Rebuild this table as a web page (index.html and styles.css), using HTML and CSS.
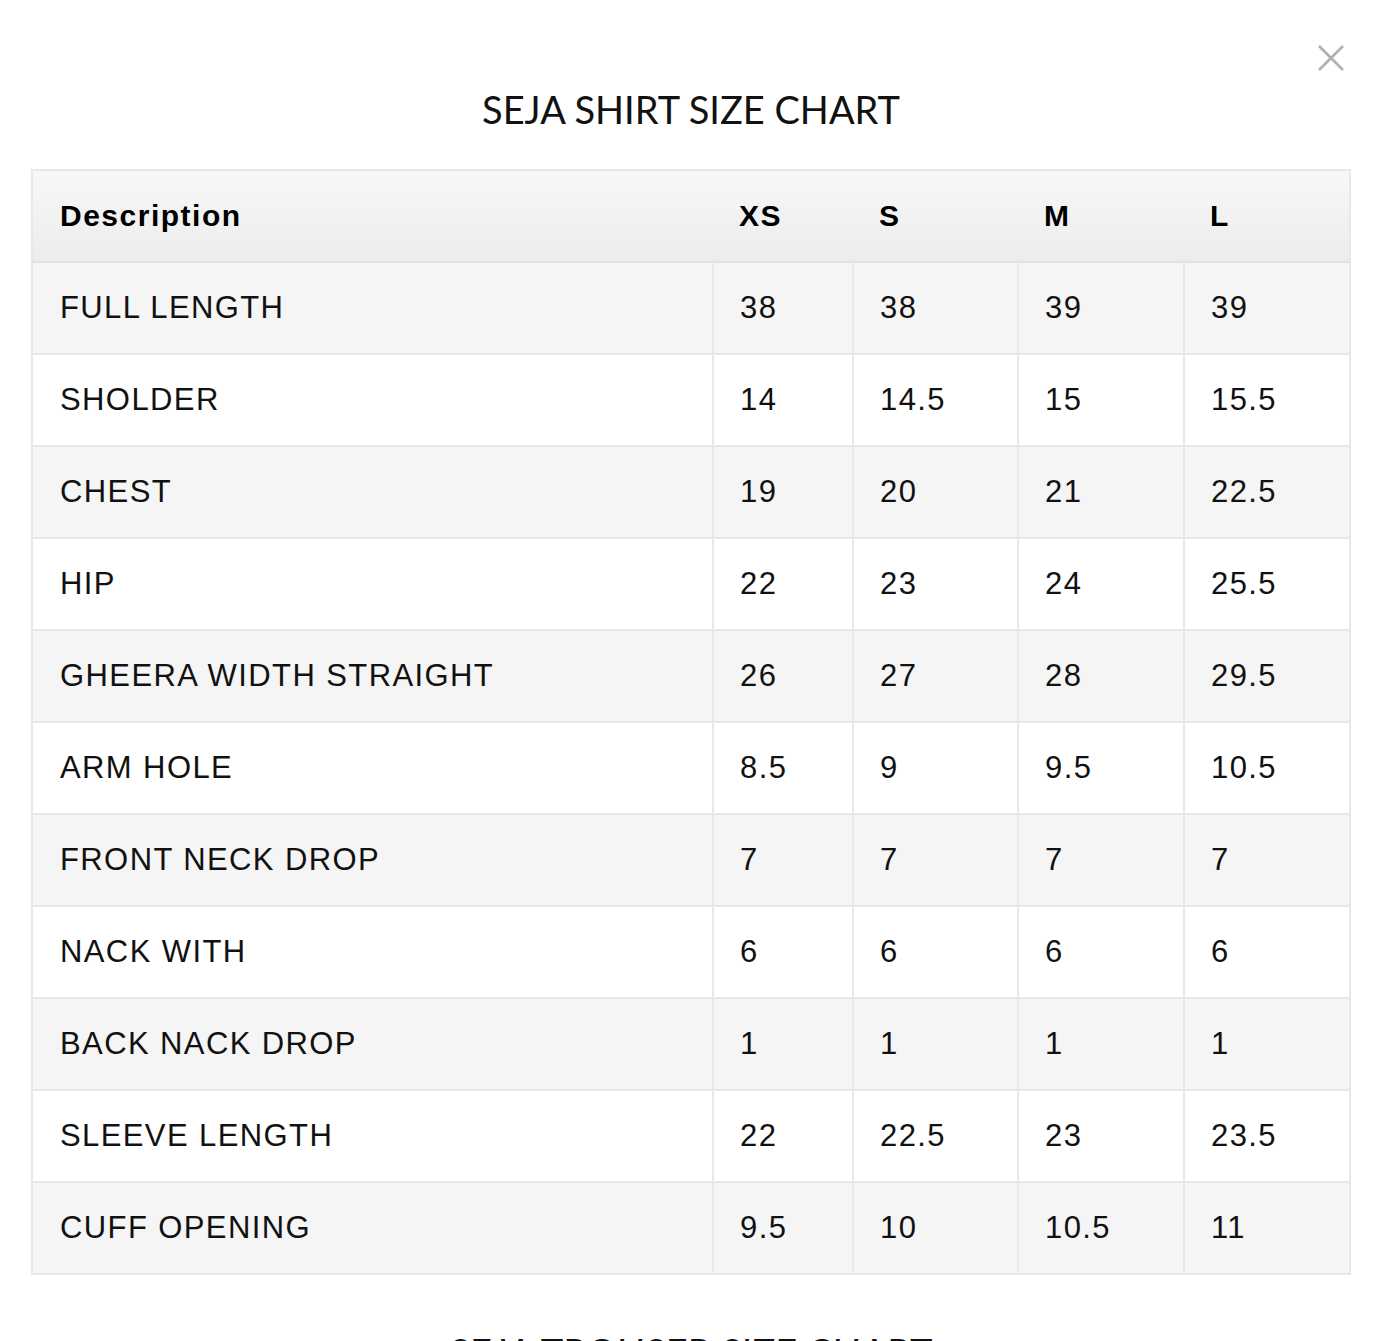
FILE: index.html
```html
<!DOCTYPE html>
<html lang="en">
<head>
<meta charset="utf-8">
<title>Seja Shirt Size Chart</title>
<link rel="stylesheet" href="styles.css">
</head>
<body>
<div class="modal">
  <button class="close" aria-label="Close">
    <svg width="30" height="30" viewBox="0 0 30 30"><path d="M3 3 L27 27 M27 3 L3 27" stroke="#b0b0b0" stroke-width="2.6" fill="none"/></svg>
  </button>
  <div class="content">
    <h1 class="title">SEJA SHIRT SIZE CHART</h1>
    <table class="chart">
      <colgroup>
        <col class="c-desc"><col class="c-xs"><col class="c-s"><col class="c-m"><col class="c-l">
      </colgroup>
      <thead>
        <tr><th>Description</th><th>XS</th><th>S</th><th>M</th><th>L</th></tr>
      </thead>
      <tbody>
        <tr><td>FULL LENGTH</td><td>38</td><td>38</td><td>39</td><td>39</td></tr>
        <tr><td>SHOLDER</td><td>14</td><td>14.5</td><td>15</td><td>15.5</td></tr>
        <tr><td>CHEST</td><td>19</td><td>20</td><td>21</td><td>22.5</td></tr>
        <tr><td>HIP</td><td>22</td><td>23</td><td>24</td><td>25.5</td></tr>
        <tr><td>GHEERA WIDTH STRAIGHT</td><td>26</td><td>27</td><td>28</td><td>29.5</td></tr>
        <tr><td>ARM HOLE</td><td>8.5</td><td>9</td><td>9.5</td><td>10.5</td></tr>
        <tr><td>FRONT NECK DROP</td><td>7</td><td>7</td><td>7</td><td>7</td></tr>
        <tr><td>NACK WITH</td><td>6</td><td>6</td><td>6</td><td>6</td></tr>
        <tr><td>BACK NACK DROP</td><td>1</td><td>1</td><td>1</td><td>1</td></tr>
        <tr><td>SLEEVE LENGTH</td><td>22</td><td>22.5</td><td>23</td><td>23.5</td></tr>
        <tr><td>CUFF OPENING</td><td>9.5</td><td>10</td><td>10.5</td><td>11</td></tr>
      </tbody>
    </table>
    <h2 class="title next">SEJA TROUSER SIZE CHART</h2>
  </div>
</div>
</body>
</html>
```
FILE: styles.css
```css
html, body {
  margin: 0;
  padding: 0;
  background: #ffffff;
}
body {
  font-family: "Liberation Sans", Arial, sans-serif;
  color: #111;
}
.modal {
  position: relative;
  padding: 0 38px 0 31px;
}
.close {
  position: absolute;
  top: 43px;
  right: 43px;
  width: 30px;
  height: 30px;
  padding: 0;
  border: 0;
  background: none;
  cursor: pointer;
}
.close svg { display: block; }
.content {
  width: 1320px;
  padding-top: 85px;
}
.title {
  margin: 0;
  font-family: "Lato", "Open Sans", sans-serif;
  font-weight: 400;
  font-size: 38px;
  line-height: 48px;
  letter-spacing: 0;
  text-align: center;
  color: #111;
}
.chart {
  margin-top: 36px;
  width: 1320px;
  border-collapse: collapse;
  table-layout: fixed;
  border: 2px solid #e8e8e8;
  font-size: 31px;
  letter-spacing: 1.4px;
}
.c-desc { width: 681px; }
.c-xs { width: 140px; }
.c-s { width: 165px; }
.c-m { width: 166px; }
.c-l { width: 166px; }
.chart th, .chart td {
  height: 92px;
  padding: 0 0 0 26px;
  text-align: left;
  vertical-align: middle;
  box-sizing: border-box;
}
.chart th:first-child, .chart td:first-child { padding-left: 27px; }
.chart th {
  font-size: 30px;
  letter-spacing: 1.5px;
}
.chart thead tr {
  background: linear-gradient(#f8f8f8, #ececec);
}
.chart th {
  font-weight: 700;
  color: #000;
  border-bottom: 2px solid #e3e3e3;
}
.chart td {
  font-weight: 400;
  color: #111;
  border: 2px solid #e8e8e8;
}
.chart tbody tr:nth-child(odd) { background: #f5f5f5; }
.chart tbody tr:nth-child(even) { background: #ffffff; }
.next {
  margin-top: 53px;
}
```
